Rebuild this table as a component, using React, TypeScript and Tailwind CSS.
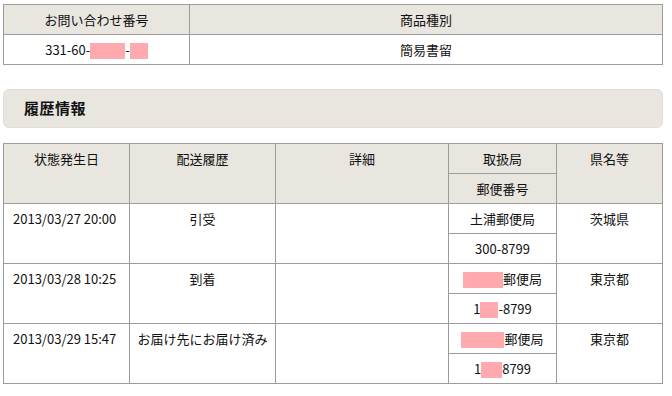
import React from "react";

const Pink = ({ w }: { w: number }) => (
  <span className="inline-block h-[16px] bg-[#ffaaae] align-middle" style={{ width: w }} />
);

const cell = "bg-white text-[13px] leading-[29px]";
const head = "bg-[#e9e5df] text-[13px] leading-[29px]";

export default function App() {
  return (
    <div
      className="w-[672px] h-[396px] bg-white text-[#111] pl-[3px] pt-[4px]"
      style={{ fontFamily: '"Noto Sans CJK JP", "Noto Sans", sans-serif' }}
    >
      {/* top table */}
      <div className="grid w-[660px] grid-cols-[185px_472px] grid-rows-[29px_29px] gap-px bg-[#9c9c9c] p-px">
        <div className={`${head} text-center`}>お問い合わせ番号</div>
        <div className={`${head} text-center`}>商品種別</div>
        <div className={`${cell} text-center`}>
          331-60-<Pink w={35} />-<Pink w={18} />
        </div>
        <div className={`${cell} text-center`}>簡易書留</div>
      </div>

      {/* section header */}
      <div className="mt-[24px] flex h-[39px] w-[660px] items-center rounded-[6px] border border-[#e2ded7] bg-[#e9e5df] pl-[20px]">
        <span className="text-[15px] font-bold tracking-[0.5px]">履歴情報</span>
      </div>

      {/* history table */}
      <div className="mt-[15px] grid w-[660px] grid-cols-[125px_145px_172px_107px_105px] grid-rows-[repeat(8,29px)] gap-px bg-[#9c9c9c] p-px">
        <div className={`${head} row-span-2 text-center`}>状態発生日</div>
        <div className={`${head} row-span-2 text-center`}>配送履歴</div>
        <div className={`${head} row-span-2 text-center`}>詳細</div>
        <div className={`${head} text-center`}>取扱局</div>
        <div className={`${head} row-span-2 text-center`}>県名等</div>
        <div className={`${head} col-start-4 text-center`}>郵便番号</div>

        {/* row 1 */}
        <div className={`${cell} row-span-2 pl-[9px]`}>2013/03/27 20:00</div>
        <div className={`${cell} row-span-2 text-center`}>引受</div>
        <div className={`${cell} row-span-2`}></div>
        <div className={`${cell} text-center`}>土浦郵便局</div>
        <div className={`${cell} row-span-2 text-center`}>茨城県</div>
        <div className={`${cell} col-start-4 text-center`}>300-8799</div>

        {/* row 2 */}
        <div className={`${cell} row-span-2 pl-[9px]`}>2013/03/28 10:25</div>
        <div className={`${cell} row-span-2 text-center`}>到着</div>
        <div className={`${cell} row-span-2`}></div>
        <div className={`${cell} text-center`}>
          <Pink w={40} />郵便局
        </div>
        <div className={`${cell} row-span-2 text-center`}>東京都</div>
        <div className={`${cell} col-start-4 text-center`}>
          1<Pink w={18} />-8799
        </div>

        {/* row 3 */}
        <div className={`${cell} row-span-2 pl-[9px]`}>2013/03/29 15:47</div>
        <div className={`${cell} row-span-2 text-center`}>お届け先にお届け済み</div>
        <div className={`${cell} row-span-2`}></div>
        <div className={`${cell} text-center`}>
          <Pink w={43} />郵便局
        </div>
        <div className={`${cell} row-span-2 text-center`}>東京都</div>
        <div className={`${cell} col-start-4 text-center`}>
          1<Pink w={21} />8799
        </div>
      </div>
    </div>
  );
}
